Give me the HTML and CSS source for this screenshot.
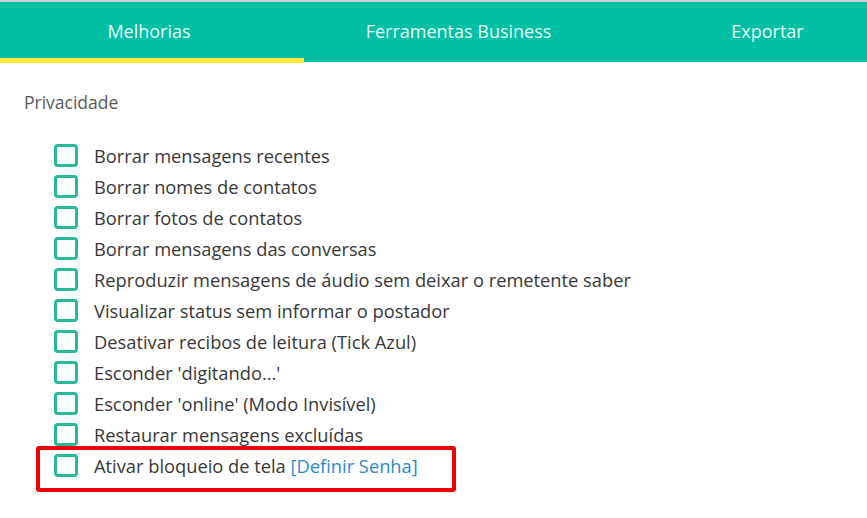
FILE: index.html
```html
<!DOCTYPE html>
<html lang="pt">
<head>
<meta charset="utf-8">
<title>Melhorias</title>
<link rel="stylesheet" href="styles.css">
</head>
<body>
<div class="topline"></div>
<nav class="tabs">
  <div class="tab active">Melhorias</div>
  <div class="tab">Ferramentas Business</div>
  <div class="tab">Exportar</div>
</nav>
<main class="content">
  <h2 class="section-title">Privacidade</h2>
  <ul class="options">
    <li class="option"><span class="box"></span><span class="label">Borrar mensagens recentes</span></li>
    <li class="option"><span class="box"></span><span class="label">Borrar nomes de contatos</span></li>
    <li class="option"><span class="box"></span><span class="label">Borrar fotos de contatos</span></li>
    <li class="option"><span class="box"></span><span class="label">Borrar mensagens das conversas</span></li>
    <li class="option"><span class="box"></span><span class="label">Reproduzir mensagens de áudio sem deixar o remetente saber</span></li>
    <li class="option"><span class="box"></span><span class="label">Visualizar status sem informar o postador</span></li>
    <li class="option"><span class="box"></span><span class="label">Desativar recibos de leitura (Tick Azul)</span></li>
    <li class="option"><span class="box"></span><span class="label">Esconder 'digitando...'</span></li>
    <li class="option"><span class="box"></span><span class="label">Esconder 'online' (Modo Invisível)</span></li>
    <li class="option"><span class="box"></span><span class="label">Restaurar mensagens excluídas</span></li>
    <li class="option highlight"><span class="box"></span><span class="label">Ativar bloqueio de tela <a class="link" href="#">[Definir Senha]</a></span></li>
  </ul>
</main>
</body>
</html>
```
FILE: styles.css
```css
*, *::before, *::after { box-sizing: border-box; }
html, body { margin: 0; padding: 0; background: #fff; }
body {
  font-family: "Open Sans", "Noto Sans", sans-serif;
  color: #333;
  width: 867px;
  height: 518px;
  overflow: hidden;
}
.topline { height: 2px; background: #c8cfcd; }
.tabs {
  display: grid;
  grid-template-columns: 304px 309px 309px;
  height: 60px;
  background: #00bfa5;
  position: relative;
  overflow-x: clip;
  overflow-y: visible;
}
.tab {
  display: flex;
  justify-content: center;
  align-items: center;
  padding-bottom: 2px;
  color: #e6fbf6;
  font-size: 18px;
  white-space: nowrap;
}
.tab.active { position: relative; padding-right: 6px; }
.tab.active::after {
  content: "";
  position: absolute;
  left: 0; right: 0;
  top: 56px;
  height: 5px;
  background: #ffeb3b;
}
.content { padding: 28px 0 0 24px; }
.section-title {
  margin: 0 0 26px;
  font-weight: 400;
  font-size: 17.5px;
  color: #5a5a5a;
  line-height: 24px;
}
.options { list-style: none; margin: 0; padding: 0 0 0 30px; }
.option {
  display: flex;
  align-items: center;
  height: 31px;
}
.box {
  width: 24px;
  height: 23px;
  border: 3px solid #26b99a;
  border-radius: 4px;
  margin-right: 16px;
  flex: none;
}
.label { font-size: 18.3px; color: #383838; white-space: nowrap; }
.link { color: #2a8bc7; text-decoration: none; }
.highlight { position: relative; }
.highlight::before {
  content: "";
  position: absolute;
  left: -18px;
  top: -4px;
  width: 420px;
  height: 46px;
  border: 4px solid #ee0000;
  border-radius: 3px;
}
```
